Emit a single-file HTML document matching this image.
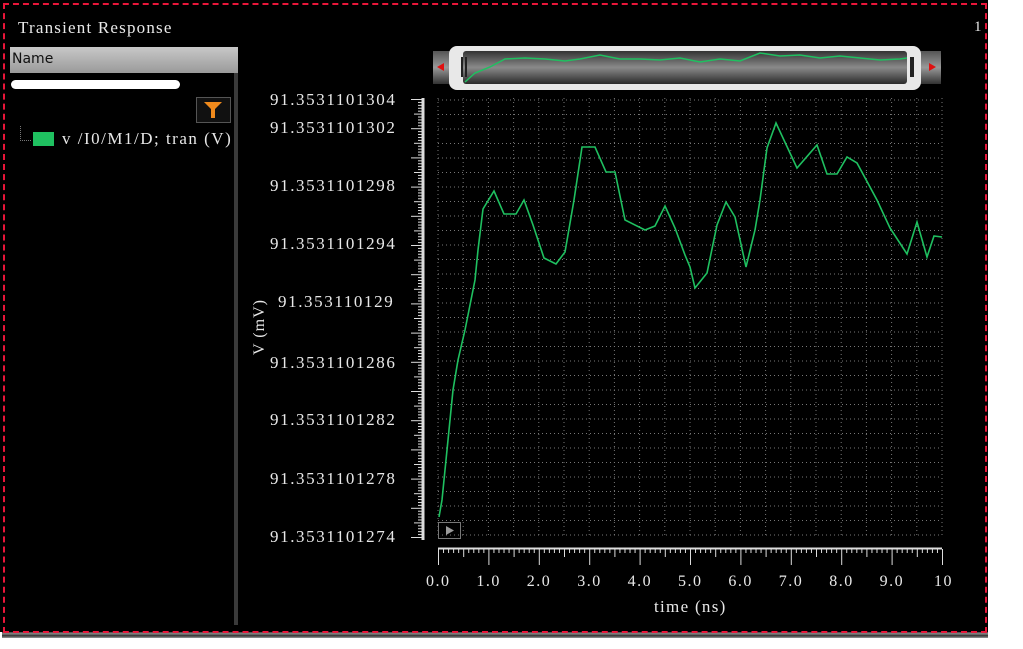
<!DOCTYPE html>
<html><head><meta charset="utf-8"><style>
body{margin:0;width:1023px;height:649px;background:#fff;overflow:hidden;position:relative;font-family:"Liberation Serif",serif}
#bg{position:absolute;left:0;top:0;width:988px;height:632px;background:#000}
#bd{position:absolute;left:3px;top:3px;width:980px;height:626px;border:2px dashed #e8163a}
.t{position:absolute;color:#e8e8e8;font-size:15px;white-space:nowrap}
.y{font-size:17px;letter-spacing:1.6px}
.x{font-size:16px;letter-spacing:1.5px}
</style></head><body>
<div id="bg"></div>
<div style="position:absolute;left:2px;top:632px;width:986px;height:6px;background:linear-gradient(#444,#888 30%,#333 60%,#999)"></div>
<div id="bd"></div>
<div class="t" style="left:18px;top:18px;font-size:17px;letter-spacing:1.2px">Transient Response</div>
<div class="t" style="left:974px;top:19px;font-size:15px">1</div>
<div style="position:absolute;left:10px;top:47px;width:228px;height:26px;background:linear-gradient(#c8c8c8,#9a9a9a);"></div>
<div style="position:absolute;left:12px;top:51px;font-family:'DejaVu Sans',sans-serif;font-size:14px;color:#111">Name</div>
<div style="position:absolute;left:11px;top:80px;width:169px;height:9px;background:#fff;border-radius:5px"></div>
<div style="position:absolute;left:234px;top:73px;width:4px;height:552px;background:#3a3a3a"></div>
<div style="position:absolute;left:196px;top:97px;width:33px;height:24px;border:1px solid #555;background:#111"></div>
<svg style="position:absolute;left:203px;top:101px" width="20" height="18"><path d="M1 1H19L12 8V17H8V8Z" fill="#f08a1c"/></svg>
<div style="position:absolute;left:20px;top:126px;width:10px;height:14px;border-left:1px dotted #777;border-bottom:1px dotted #777"></div>
<div style="position:absolute;left:33px;top:132px;width:21px;height:14px;background:#1fc060"></div>
<div class="t" style="left:62px;top:129px;font-size:17px;letter-spacing:1.5px">v /I0/M1/D; tran (V)</div>
<svg style="position:absolute;left:0;top:0" width="988" height="632">
<defs><linearGradient id="g1" x1="0" y1="0" x2="0" y2="1"><stop offset="0" stop-color="#555"/><stop offset=".5" stop-color="#999"/><stop offset="1" stop-color="#333"/></linearGradient>
<linearGradient id="g2" x1="0" y1="0" x2="0" y2="1"><stop offset="0" stop-color="#333"/><stop offset=".5" stop-color="#8a8a8a"/><stop offset="1" stop-color="#2a2a2a"/></linearGradient></defs>
<rect x="433" y="51" width="508" height="33" fill="url(#g1)"/>
<rect x="449" y="46" width="472" height="44" rx="8" fill="#e8e8e8"/>
<rect x="463" y="51" width="444" height="33" rx="3" fill="url(#g2)"/>
<polygon points="437,67 444,63 444,71" fill="#e01010"/>
<polygon points="936,63 929,59 929,67" fill="#e01010" transform="translate(0,4)"/>
<rect x="461" y="57" width="2" height="20" fill="#222"/><rect x="465" y="57" width="2" height="20" fill="#222"/>
<rect x="910" y="57" width="4" height="20" fill="#222"/>
<polyline fill="none" stroke="#1fc060" stroke-width="1.5" points="465,82 475,73 490,67 505,59 525,58 545,59 565,61 580,59 600,55 620,59 640,59 660,60 680,58 700,62 720,59 740,61 760,53 780,56 800,55 820,58 840,56 860,58 880,60 900,59 907,58"/>
<g stroke="#777" stroke-width="1" stroke-dasharray="1,3" id="hg"></g>
<g stroke="#777" stroke-width="1" stroke-dasharray="1,3" id="vg"></g>
<polyline fill="none" stroke="#1fc060" stroke-width="1.6" points="439,517 442,500 445,470 448,440 453,390 458,360 465,330 470,305 475,280 478,250 483,209 494,191 504,214 516,214 524,200 533,225 544,258 556,264 565,252 574,200 582,147 595,147 606,172 615,172 625,220 645,230 655,226 665,206 675,228 685,255 690,267 695,288 707,273 717,225 726,202 735,217 746,267 755,230 760,200 767,148 776,123 797,168 817,145 827,174 837,174 847,157 857,163 877,200 890,228 907,254 917,222 927,257 934,236 942,237"/>
<rect x="438.5" y="522.5" width="22" height="16" fill="none" stroke="#777"/>
<polygon points="446,526 454,530.5 446,535" fill="#999"/>
<line x1="423" y1="98" x2="423" y2="540" stroke="#ddd" stroke-width="3"/>
<g id="yt" stroke="#ddd"></g>
<line x1="438" y1="548.5" x2="942" y2="548.5" stroke="#ddd" stroke-width="2"/>
<g id="xt" stroke="#ddd"></g>
</svg>
<div class="t y" style="left:270px;top:90px">91.3531101304</div>
<div class="t y" style="left:270px;top:118px">91.3531101302</div>
<div class="t y" style="left:270px;top:176px">91.3531101298</div>
<div class="t y" style="left:270px;top:234px">91.3531101294</div>
<div class="t y" style="left:278px;top:292px">91.353110129</div>
<div class="t y" style="left:270px;top:353px">91.3531101286</div>
<div class="t y" style="left:270px;top:410px">91.3531101282</div>
<div class="t y" style="left:270px;top:469px">91.3531101278</div>
<div class="t y" style="left:270px;top:527px">91.3531101274</div>
<div class="t" style="left:232px;top:318px;font-size:16px;letter-spacing:1px;transform:rotate(-90deg);transform-origin:center">V (mV)</div>
<div id="xl"></div>
<div class="t" style="left:654px;top:597px;font-size:17px;letter-spacing:1.3px">time (ns)</div>
<script>
var ns="http://www.w3.org/2000/svg";
function ln(g,a,b,c,d){var l=document.createElementNS(ns,'line');l.setAttribute('x1',a);l.setAttribute('y1',b);l.setAttribute('x2',c);l.setAttribute('y2',d);g.appendChild(l);}
var hg=document.getElementById('hg');
for(var i=0;i<=30;i++){var y=100+i*14.5;ln(hg,438,y,942,y);}
var vg=document.getElementById('vg');
for(var i=0;i<=20;i++){var x=438+i*25.2;ln(vg,x,98,x,538);}
var yt=document.getElementById('yt');
for(var i=0;i<=150;i++){var y=99.5+i*2.92;var L=(i%5==0)?9:5;if(i%10==0)L=12;ln(yt,423-L,y,423,y);}
var xt=document.getElementById('xt');
for(var i=0;i<=100;i++){var x=438.5+i*5.04;var L=(i%10==0)?16:(i%5==0?8:4);ln(xt,x,549,x,549+L);}
var xl=document.getElementById('xl');var labs=['0.0','1.0','2.0','3.0','4.0','5.0','6.0','7.0','8.0','9.0','10'];
for(var i=0;i<=10;i++){var d=document.createElement('div');d.className='t x';d.textContent=labs[i];d.style.left=(438+i*50.4-(i==10?8:12))+'px';d.style.top='573px';xl.appendChild(d);}
</script>
</body></html>
